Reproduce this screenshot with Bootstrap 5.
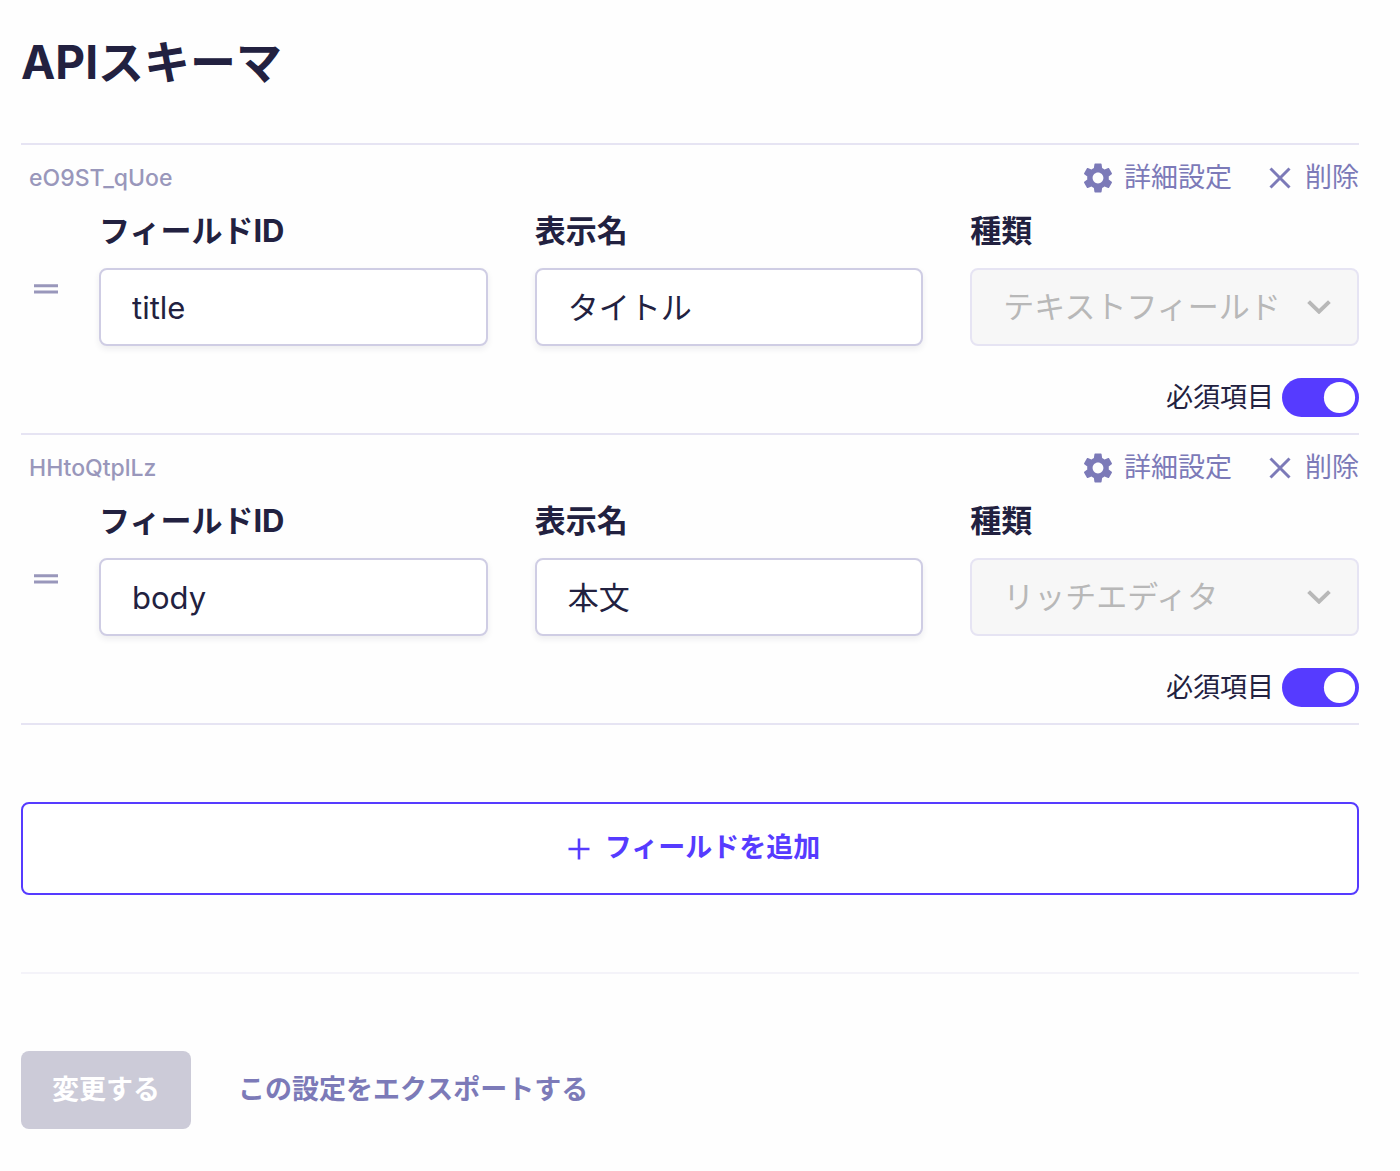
<!DOCTYPE html>
<html lang="ja">
<head>
<meta charset="utf-8">
<meta name="viewport" content="width=device-width, initial-scale=1">
<title>APIスキーマ</title>
<link href="https://cdn.jsdelivr.net/npm/bootstrap@5.3.0/dist/css/bootstrap.min.css" rel="stylesheet">
<style>
:root {
  --ink: #222140;
  --accent: #563bff;
  --muted: #7c7ab8;
  --faint: #9997bb;
  --line: #e6e4f3;
}
body {
  font-family: Inter, "Noto Sans CJK JP", sans-serif;
  font-size: 27px;
  line-height: 40px;
  color: var(--ink);
  background: #fefefe;
}
.page { padding: 27px 41px 42px 21px; }
.page-title { font-size: 46px; line-height: 70px; font-weight: 700; margin-bottom: 46px; }
.field-list { border-bottom: 2px solid var(--line); margin-bottom: 77px; }
.field-item { border-top: 2px solid var(--line); padding: 13px 0 16px; }
.field-head { padding-left: 8px; margin-bottom: 10px; }
.field-key { font-size: 23px; font-weight: 500; color: var(--faint); }
.head-actions { gap: 37px; }
.action { border: 0; background: none; padding: 0; color: var(--muted); display: flex; align-items: center; }
.action svg { fill: none; stroke: currentColor; }
.handle { flex: 0 0 78px; padding: 64px 0 0 13px; }
.handle button { border: 0; background: none; padding: 0; display: flex; align-items: center; height: 34px; color: var(--faint); }
.fields { --bs-gutter-x: 47px; }
.form-label { font-size: 31px; line-height: 46px; font-weight: 700; margin-bottom: 14px; display: block; }
.form-control, .form-select {
  height: 78px;
  font-size: 31px;
  line-height: 46px;
  color: var(--ink);
  border: 2px solid #cfcde4;
  border-radius: 8px;
  padding: 0 31px;
}
.form-control { box-shadow: 0 3px 6px rgba(34, 33, 64, .08); }
.form-control:lang(ja-JP) { font-family: "Noto Sans CJK JP", sans-serif; padding-bottom: 3px; }
.form-select {
  padding-right: 70px;
  background-image: url("data:image/svg+xml,%3Csvg xmlns='http://www.w3.org/2000/svg' viewBox='0 0 24 14'%3E%3Cpath d='M1.6 1.6 12 11.6 22.4 1.6' fill='none' stroke='%23b8b8b8' stroke-width='4'/%3E%3C/svg%3E");
  background-size: 24px 14px;
  background-position: right 26px center;
}
.form-select:disabled { color: #b8b8b8; background-color: #f7f7f7; border-color: var(--line); opacity: 1; }
.required-row { margin-top: 32px; gap: 8px; line-height: 39px; }
.form-switch .form-check-input {
  width: 77px;
  height: 39px;
  border: 0;
  margin: 0;
  float: none;
  border-radius: 39px;
  background-image: url("data:image/svg+xml,%3Csvg xmlns='http://www.w3.org/2000/svg' viewBox='-4 -4 8 8'%3E%3Ccircle r='3.2' fill='%23fff'/%3E%3C/svg%3E");
}
.form-switch .form-check-input:checked {
  background-color: var(--accent);
  background-image: url("data:image/svg+xml,%3Csvg xmlns='http://www.w3.org/2000/svg' viewBox='-4 -4 8 8'%3E%3Ccircle r='3.2' fill='%23fff'/%3E%3C/svg%3E");
}
.add-field {
  height: 93px;
  border: 2px solid var(--accent);
  border-radius: 8px;
  color: var(--accent);
  background: #fff;
  font-size: 27px;
  font-weight: 700;
  gap: 15px;
  padding: 0 12px 0 20px;
}
.add-field:hover { color: #fff; background: var(--accent); }
.divider { border: 0; border-top: 2px solid #f4f3f9; opacity: 1; margin: 77px 0; }
.foot { gap: 47px; }
.save { height: 78px; padding: 0 31px; border: 0; border-radius: 8px; font-size: 27px; font-weight: 700; }
.save:disabled { background: #cccbd8; color: #fff; opacity: 1; }
.export { color: var(--muted); font-weight: 700; text-decoration: none; }
.gear-icon { margin-right: 10px; }
.cross-icon { margin-right: 14px; }
</style>
</head>
<body>
<svg class="d-none" aria-hidden="true">
  <symbol id="gear" viewBox="2 2 20 20">
    <path fill="currentColor" stroke="none" d="M19.14 12.94c.04-.3.06-.61.06-.94 0-.32-.02-.64-.07-.94l2.03-1.58c.18-.14.23-.41.12-.61l-1.92-3.32c-.12-.22-.37-.29-.59-.22l-2.39.96c-.5-.38-1.03-.7-1.62-.94L14.4 2.81c-.04-.24-.24-.41-.48-.41h-3.84c-.24 0-.43.17-.47.41L9.25 5.35c-.59.24-1.13.57-1.62.94l-2.39-.96c-.22-.08-.47 0-.59.22L2.74 8.87c-.12.21-.08.47.12.61l2.03 1.58c-.05.3-.09.63-.09.94s.02.64.07.94l-2.03 1.58c-.18.14-.23.41-.12.61l1.92 3.32c.12.22.37.29.59.22l2.39-.96c.5.38 1.03.7 1.62.94l.36 2.54c.05.24.24.41.48.41h3.84c.24 0 .44-.17.47-.41l.36-2.54c.59-.24 1.13-.56 1.62-.94l2.39.96c.22.08.47 0 .59-.22l1.92-3.32c.12-.22.07-.47-.12-.61l-2.01-1.58zM12 15.6c-1.98 0-3.6-1.62-3.6-3.6s1.62-3.6 3.6-3.6 3.6 1.62 3.6 3.6-1.62 3.6-3.6 3.6z"/>
  </symbol>
  <symbol id="cross" viewBox="0 0 22 22"><path d="M1.5 1.5l19 19M20.5 1.5l-19 19" stroke-width="3"/></symbol>
  <symbol id="grip" viewBox="0 0 24 10"><path d="M0 1.8h24M0 8h24" stroke="currentColor" stroke-width="3"/></symbol>
</svg>
<main class="page">
  <h1 class="page-title">APIスキーマ</h1>

  <div class="field-list">
    <section class="field-item">
      <div class="field-head d-flex justify-content-between align-items-center">
        <span class="field-key">eO9ST_qUoe</span>
        <div class="head-actions d-flex">
          <button type="button" class="action"><svg class="gear-icon" width="32" height="30"><use href="#gear"/></svg>詳細設定</button>
          <button type="button" class="action"><svg class="cross-icon" width="22" height="22"><use href="#cross"/></svg>削除</button>
        </div>
      </div>
      <div class="d-flex">
        <div class="handle"><button type="button" aria-label="並べ替え"><svg width="24" height="10"><use href="#grip"/></svg></button></div>
        <div class="flex-grow-1">
          <div class="row fields">
            <div class="col">
              <label class="form-label" for="id1">フィールドID</label>
              <input class="form-control" id="id1" type="text" value="title">
            </div>
            <div class="col">
              <label class="form-label" for="name1">表示名</label>
              <input class="form-control" id="name1" type="text" lang="ja-JP" value="タイトル">
            </div>
            <div class="col">
              <label class="form-label" for="kind1">種類</label>
              <select class="form-select" id="kind1" disabled><option>テキストフィールド</option></select>
            </div>
          </div>
          <div class="required-row form-switch d-flex justify-content-end align-items-center p-0">
            <label for="req1">必須項目</label>
            <input class="form-check-input" id="req1" type="checkbox" role="switch" checked>
          </div>
        </div>
      </div>
    </section>

    <section class="field-item">
      <div class="field-head d-flex justify-content-between align-items-center">
        <span class="field-key">HHtoQtplLz</span>
        <div class="head-actions d-flex">
          <button type="button" class="action"><svg class="gear-icon" width="32" height="30"><use href="#gear"/></svg>詳細設定</button>
          <button type="button" class="action"><svg class="cross-icon" width="22" height="22"><use href="#cross"/></svg>削除</button>
        </div>
      </div>
      <div class="d-flex">
        <div class="handle"><button type="button" aria-label="並べ替え"><svg width="24" height="10"><use href="#grip"/></svg></button></div>
        <div class="flex-grow-1">
          <div class="row fields">
            <div class="col">
              <label class="form-label" for="id2">フィールドID</label>
              <input class="form-control" id="id2" type="text" value="body">
            </div>
            <div class="col">
              <label class="form-label" for="name2">表示名</label>
              <input class="form-control" id="name2" type="text" lang="ja-JP" value="本文">
            </div>
            <div class="col">
              <label class="form-label" for="kind2">種類</label>
              <select class="form-select" id="kind2" disabled><option>リッチエディタ</option></select>
            </div>
          </div>
          <div class="required-row form-switch d-flex justify-content-end align-items-center p-0">
            <label for="req2">必須項目</label>
            <input class="form-check-input" id="req2" type="checkbox" role="switch" checked>
          </div>
        </div>
      </div>
    </section>
  </div>

  <button type="button" class="btn add-field w-100 d-flex justify-content-center align-items-center">
    <svg width="22" height="22" viewBox="0 0 22 22" fill="none" stroke="currentColor" stroke-width="2.6" aria-hidden="true"><path d="M11 .5v21M.5 11h21"/></svg>
    フィールドを追加
  </button>

  <hr class="divider">

  <div class="foot d-flex align-items-center">
    <button type="submit" class="btn save" disabled>変更する</button>
    <a class="export" href="#">この設定をエクスポートする</a>
  </div>
</main>
<script src="https://cdn.jsdelivr.net/npm/bootstrap@5.3.0/dist/js/bootstrap.bundle.min.js"></script>
</body>
</html>
